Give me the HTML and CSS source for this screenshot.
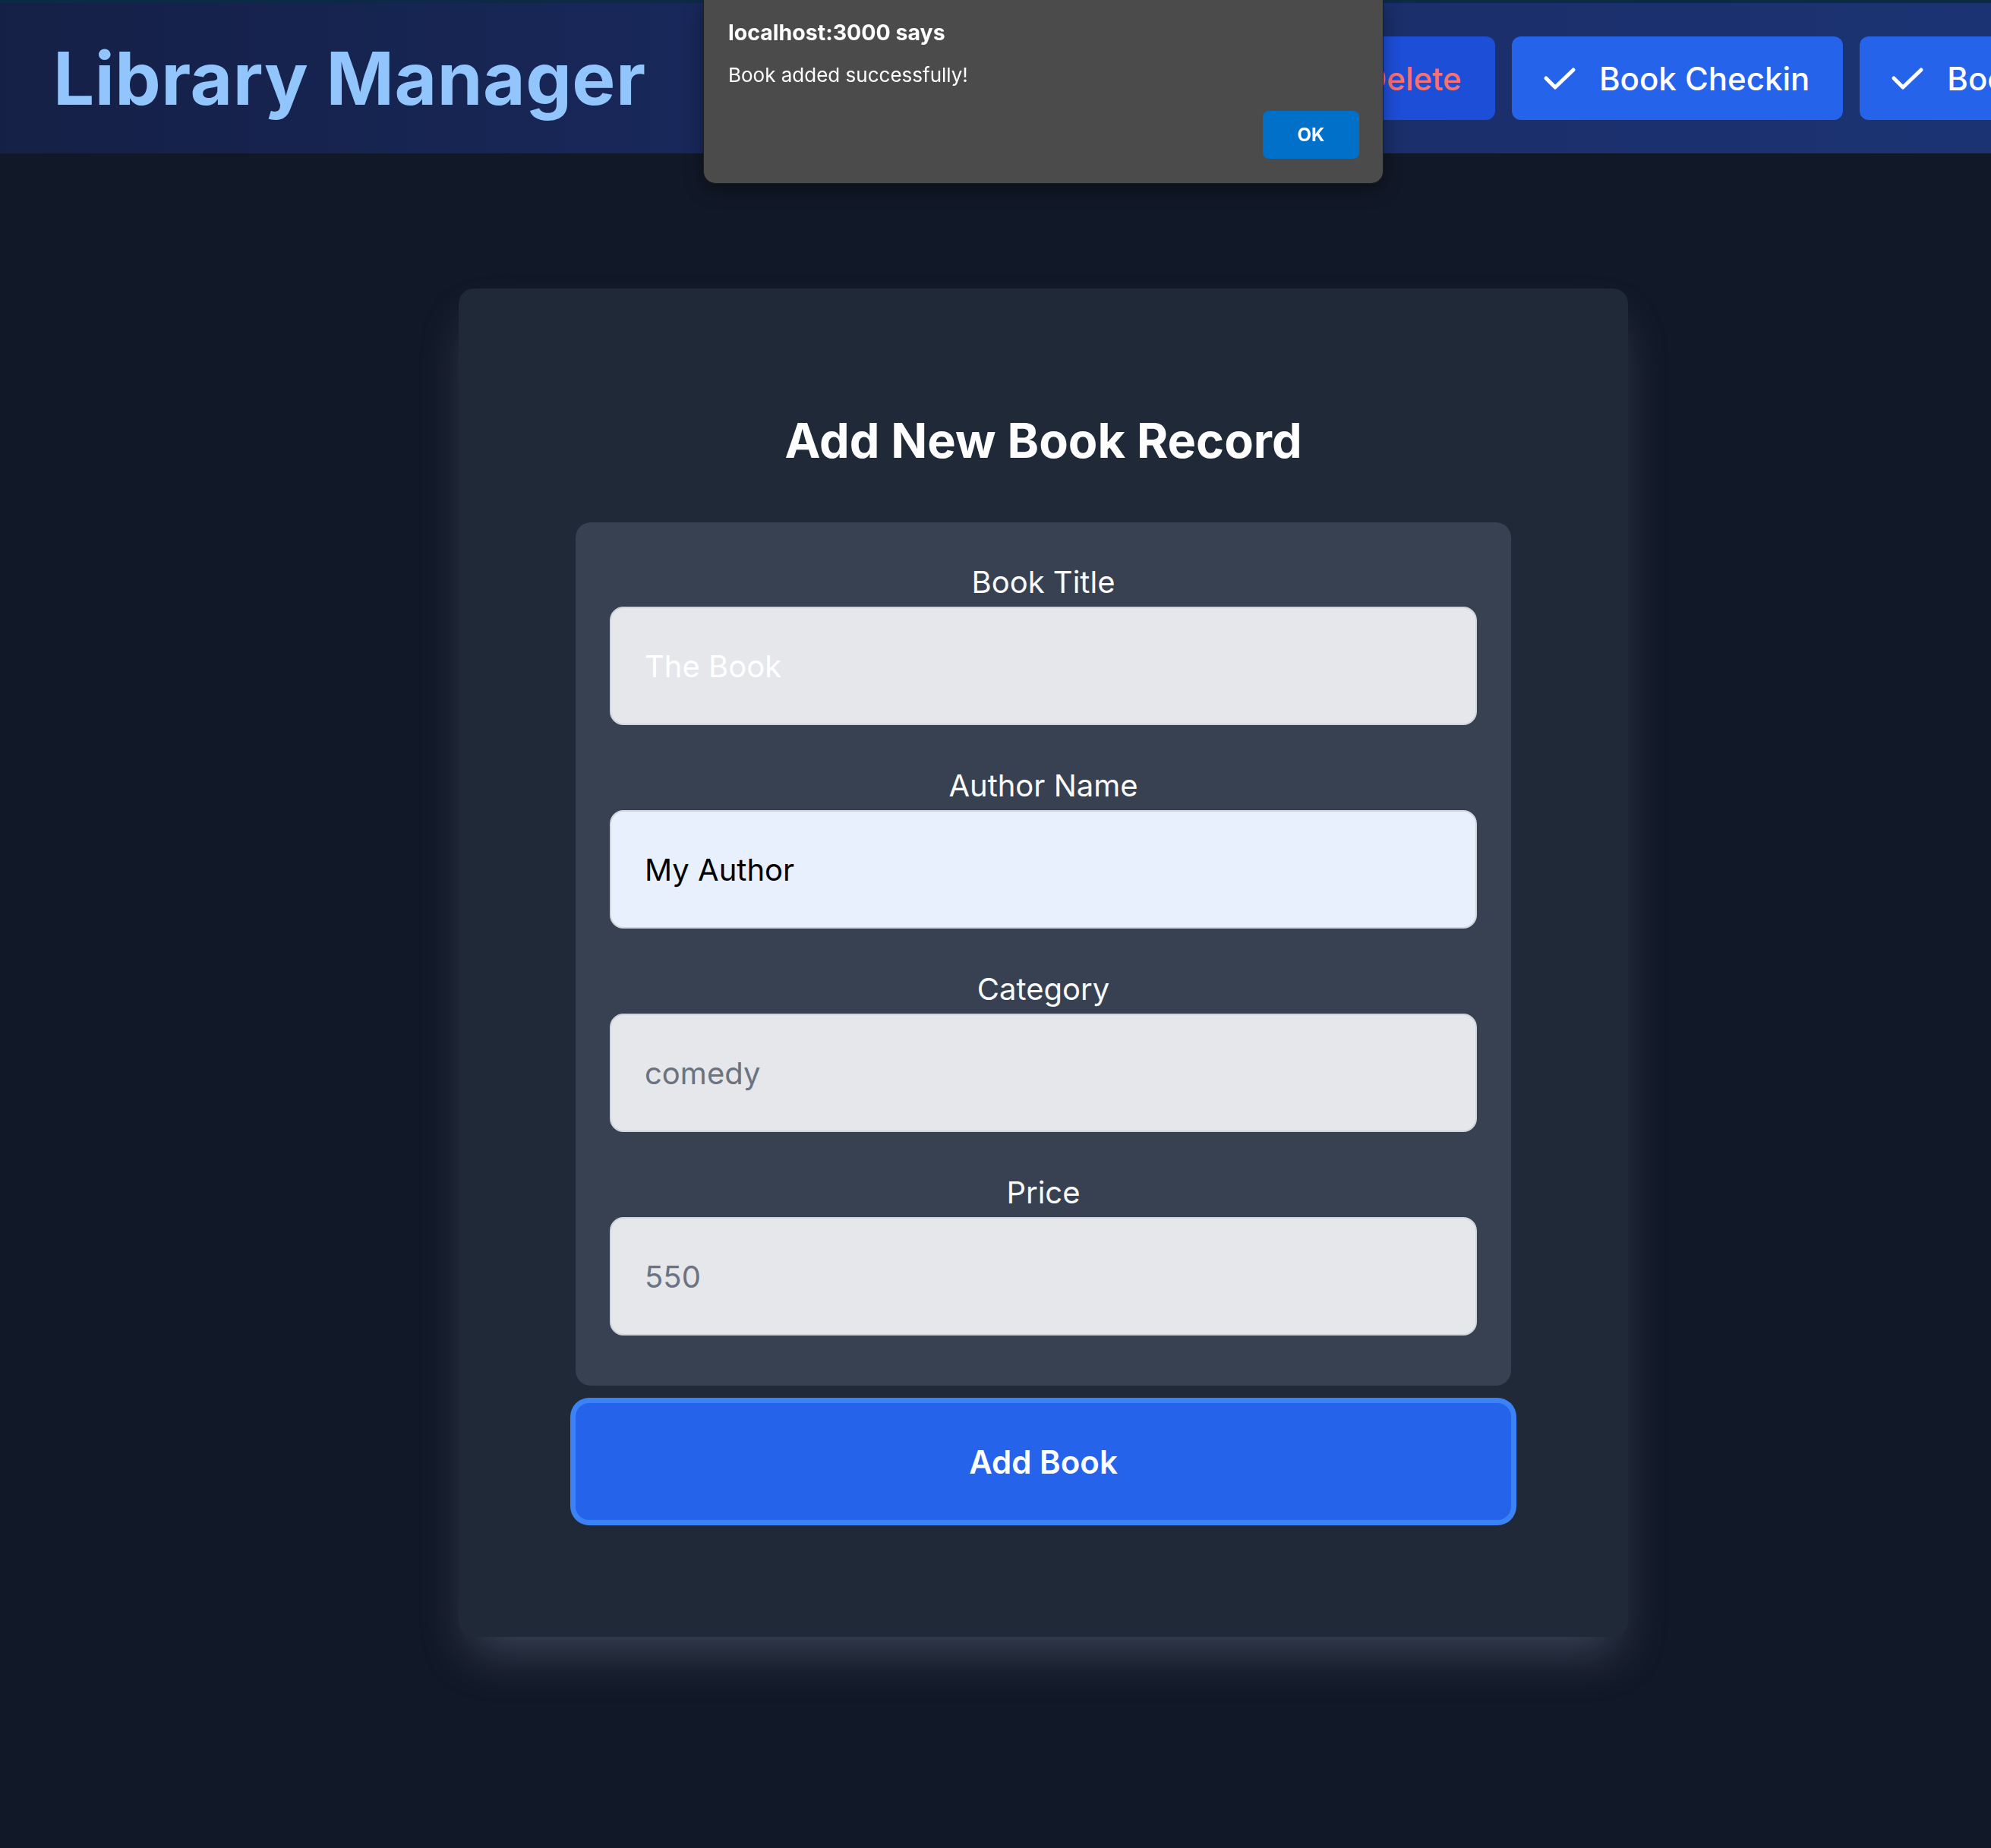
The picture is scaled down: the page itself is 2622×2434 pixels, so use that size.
FILE: index.html
```html
<!DOCTYPE html>
<html lang="en">
<head>
<meta charset="utf-8">
<title>Library Manager</title>
<link rel="stylesheet" href="styles.css">
</head>
<body>
  <div class="topstrip"></div>
  <header class="header">
    <h1 class="brand">Library Manager</h1>
    <nav class="nav">
      <button class="nav-btn nav-btn--update">
        <svg class="icon" viewBox="0 0 44 34" aria-hidden="true"><path d="M6 26 L30 4 L38 12 L14 32 L6 32 Z" fill="none" stroke="#fff" stroke-width="4" stroke-linejoin="round"/></svg>
        <span>Update</span>
      </button>
      <button class="nav-btn nav-btn--delete">
        <svg class="icon" viewBox="0 0 44 34" aria-hidden="true"><path d="M10 8 H34 M16 8 V4 H28 V8 M13 8 L15 32 H29 L31 8" fill="none" stroke="#f87171" stroke-width="4" stroke-linejoin="round"/></svg>
        <span>Delete</span>
      </button>
      <button class="nav-btn">
        <svg class="icon" viewBox="0 0 44 34" aria-hidden="true"><path d="M4 17 L16 29 L40 6" fill="none" stroke="#fff" stroke-width="5" stroke-linecap="round" stroke-linejoin="round"/></svg>
        <span>Book Checkin</span>
      </button>
      <button class="nav-btn">
        <svg class="icon" viewBox="0 0 44 34" aria-hidden="true"><path d="M4 17 L16 29 L40 6" fill="none" stroke="#fff" stroke-width="5" stroke-linecap="round" stroke-linejoin="round"/></svg>
        <span>Book Checkout</span>
      </button>
    </nav>
  </header>

  <main class="main">
    <section class="card">
      <h2 class="card-title">Add New Book Record</h2>
      <form class="panel">
        <div class="field">
          <label class="label" for="title">Book Title</label>
          <input class="input input--white" id="title" type="text" value="The Book">
        </div>
        <div class="field">
          <label class="label" for="author">Author Name</label>
          <input class="input input--autofill" id="author" type="text" value="My Author">
        </div>
        <div class="field">
          <label class="label" for="category">Category</label>
          <input class="input" id="category" type="text" placeholder="comedy">
        </div>
        <div class="field">
          <label class="label" for="price">Price</label>
          <input class="input" id="price" type="text" placeholder="550">
        </div>
      </form>
      <button class="submit" type="button">Add Book</button>
    </section>
  </main>

  <div class="dialog" role="alertdialog">
    <div class="dialog-title">localhost:3000 says</div>
    <div class="dialog-msg">Book added successfully!</div>
    <div class="dialog-actions">
      <button class="dialog-ok" type="button">OK</button>
    </div>
  </div>
</body>
</html>
```

FILE: styles.css
```css
* { box-sizing: border-box; }

html, body {
  margin: 0;
  padding: 0;
}

body {
  width: 2622px;
  height: 2434px;
  overflow: hidden;
  background: #111827;
  font-family: Inter, "Noto Sans", sans-serif;
  color: #fff;
}

.topstrip {
  height: 4px;
  background: #0b2a44;
}

.header {
  height: 198px;
  display: flex;
  align-items: center;
  padding-left: 70px;
  background: linear-gradient(90deg, #152046 0%, #1a2d68 60%, #1c3373 100%);
  overflow: hidden;
}

.brand {
  flex: none;
  width: 779px;
  margin: 0;
  font-size: 96px;
  font-weight: 700;
  color: #93c5fd;
  white-space: nowrap;
  letter-spacing: 0.5px;
}

.nav {
  flex: none;
  display: flex;
  gap: 22px;
  margin-left: 480px;
}

.nav-btn {
  flex: none;
  height: 110px;
  display: flex;
  align-items: center;
  gap: 30px;
  padding: 0 44px 0 41px;
  border: none;
  border-radius: 12px;
  background: #2563eb;
  color: #fff;
  font-family: Inter, sans-serif;
  font-size: 42px;
  font-weight: 500;
  white-space: nowrap;
}

.nav-btn--update { width: 330px; }

.nav-btn--delete {
  width: 288px;
  background: #1d4ed8;
  color: #f87171;
}

.icon {
  width: 44px;
  height: 34px;
  flex: none;
}

.main {
  padding: 178px 0 0 604px;
}

.card {
  width: 1540px;
  padding: 162px 154px 154px;
  background: #1f2937;
  border-radius: 20px;
  box-shadow: 0 34px 64px -14px rgba(148, 163, 184, 0.32);
}

.card-title {
  margin: 0 0 70px;
  text-align: center;
  font-size: 63px;
  line-height: 76px;
  font-weight: 700;
  color: #fff;
}

.panel {
  display: flex;
  flex-direction: column;
  gap: 52px;
  padding: 51px 45px 66px;
  background: #374151;
  border-radius: 20px;
}

.field {
  display: flex;
  flex-direction: column;
}

.label {
  display: block;
  text-align: center;
  font-size: 40px;
  line-height: 56px;
  margin-bottom: 4px;
  color: #f9fafb;
}

.input {
  display: block;
  width: 100%;
  height: 156px;
  padding: 0 44px;
  border: 2px solid #d1d5db;
  border-radius: 18px;
  background: #e5e7eb;
  font-family: Inter, sans-serif;
  font-size: 40px;
  color: #6b7280;
  outline: none;
}

.input::placeholder { color: #6b7280; opacity: 1; }

.input--white { color: #ffffff; }

.input--autofill {
  background: #e8f0fe;
  color: #000;
}

.submit {
  display: block;
  width: 100%;
  height: 154px;
  margin-top: 23px;
  border: none;
  border-radius: 18px;
  background: #2563eb;
  box-shadow: 0 0 0 7px #3b82f6;
  color: #fff;
  font-family: Inter, sans-serif;
  font-size: 42px;
  font-weight: 600;
}

.dialog {
  position: fixed;
  top: 0;
  left: 926px;
  width: 896px;
  height: 242px;
  padding: 26px 31px 0 32px;
  background: #4b4b4b;
  border: 1px solid #1c1c1c;
  border-top: none;
  border-radius: 0 0 16px 16px;
  box-shadow: 0 8px 24px rgba(0, 0, 0, 0.35);
  font-family: Inter, "Liberation Sans", sans-serif;
}

.dialog-title {
  font-size: 28.5px;
  line-height: 34px;
  font-weight: 700;
  color: #fff;
}

.dialog-msg {
  margin-top: 22px;
  font-size: 26px;
  line-height: 34px;
  color: #fff;
}

.dialog-actions {
  display: flex;
  justify-content: flex-end;
  margin-top: 30px;
}

.dialog-ok {
  width: 127px;
  height: 63px;
  border: none;
  border-radius: 8px;
  background: #0070c9;
  color: #fff;
  font-family: Inter, sans-serif;
  font-size: 24px;
  font-weight: 700;
}
```
